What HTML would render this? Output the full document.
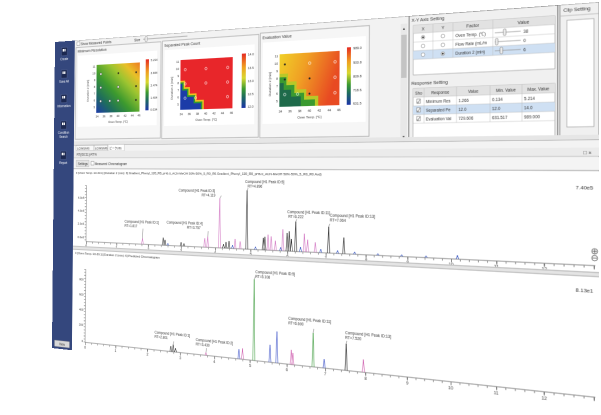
<!DOCTYPE html>
<html><head><meta charset="utf-8"><style>
html,body{margin:0;padding:0;background:#fff;width:601px;height:415px;overflow:hidden}
#w{position:absolute;left:0;top:0;width:1000px;height:600px;transform-origin:0 0;
transform:matrix3d(0.39475,-0.040498,0,-0.00024917,-0.005475,0.50682,0,-0.0000091417,0,0,1,0,55,42,0,1);}
svg text{font-family:"Liberation Sans","Noto Sans CJK JP",sans-serif;fill:#333}
</style></head><body>
<div id="w">
<svg width="1000" height="600" viewBox="0 0 1000 600" xmlns="http://www.w3.org/2000/svg">
<defs>
<linearGradient id="h1" x1="0" y1="1" x2="1" y2="0">
<stop offset="0" stop-color="#1c3aa8"/><stop offset="0.22" stop-color="#1f6f5a"/><stop offset="0.42" stop-color="#3d9a2e"/><stop offset="0.65" stop-color="#9cc430"/><stop offset="0.82" stop-color="#e8c028"/><stop offset="1" stop-color="#ee7a22"/></linearGradient>
<linearGradient id="cb" x1="0" y1="0" x2="0" y2="1">
<stop offset="0" stop-color="#e52a22"/><stop offset="0.25" stop-color="#f0a020"/><stop offset="0.45" stop-color="#d8d830"/><stop offset="0.65" stop-color="#3a9a30"/><stop offset="0.8" stop-color="#1d6a60"/><stop offset="1" stop-color="#1c34a8"/></linearGradient>
<linearGradient id="h3" x1="0" y1="0" x2="1" y2="0.3">
<stop offset="0" stop-color="#f0d028"/><stop offset="0.45" stop-color="#f0a024"/><stop offset="1" stop-color="#e84a22"/></linearGradient>
</defs>
<!-- window -->
<rect x="0" y="0" width="1000" height="600" fill="#f2f2f2" stroke="#9a9a9a" stroke-width="1.5"/>
<!-- sidebar -->
<rect x="0" y="0" width="48" height="600" fill="#34477d"/>
<g fill="#1c2850" stroke="#6a7aa8" stroke-width="0.6">
<rect x="16" y="12" width="14" height="16"/><rect x="16" y="56" width="14" height="16"/><rect x="16" y="104" width="14" height="16"/><rect x="16" y="156" width="14" height="16"/><rect x="16" y="215" width="14" height="16"/></g>
<g fill="#fff"><rect x="19" y="15" width="3" height="5"/><rect x="23" y="15" width="3" height="5"/><rect x="19" y="59" width="3" height="5"/><rect x="23" y="59" width="3" height="5"/><rect x="19" y="107" width="3" height="5"/><rect x="23" y="107" width="3" height="5"/><rect x="19" y="159" width="3" height="5"/><rect x="23" y="159" width="3" height="5"/><rect x="19" y="218" width="3" height="5"/><rect x="23" y="218" width="3" height="5"/></g>
<g font-size="6.5" text-anchor="middle"><text x="23" y="37" style="fill:#fff">Create</text><text x="23" y="81" style="fill:#fff">Save All</text><text x="23" y="129" style="fill:#fff">Information</text><text x="23" y="181" style="fill:#fff">Condition</text><text x="23" y="189" style="fill:#fff">Search</text><text x="23" y="240" style="fill:#fff">Report</text></g>
<rect x="6" y="584" width="36" height="12" fill="#d8d8d8" stroke="#888" stroke-width="0.6"/><text x="24" y="593" font-size="6.5" text-anchor="middle">View</text>

<!-- toolbar -->
<rect x="53" y="3" width="7" height="7" fill="#fff" stroke="#555" stroke-width="0.6"/>
<text x="62" y="10" font-size="7">Show Measured Points</text>
<text x="185" y="10" font-size="7">Size</text>
<line x1="205" y1="7" x2="300" y2="7" stroke="#aaa" stroke-width="1.5"/>
<rect x="209" y="2" width="5" height="10" rx="2" fill="#eee" stroke="#666" stroke-width="0.6"/>

<!-- heatmap panels -->
<g stroke="#a8a8a8" stroke-width="1.2">
<rect x="51" y="14" width="193" height="178" fill="#f6f6f6"/>
<rect x="247" y="13" width="197" height="180" fill="#f6f6f6"/>
<rect x="447" y="11" width="199" height="183" fill="#f6f6f6"/></g>
<rect x="56" y="30" width="180" height="138" fill="#fff"/>
<rect x="252" y="30" width="184" height="140" fill="#fff"/>
<rect x="452" y="28" width="188" height="142" fill="#fff"/>
<g font-size="7.5"><text x="55" y="24">Minimum Resolution</text><text x="251" y="24">Separated Peak Count</text><text x="451" y="22">Evaluation Value</text></g>

<!-- plot1 -->
<rect x="100" y="50" width="98" height="92" fill="url(#h1)"/>
<rect x="211" y="45" width="7" height="95" fill="url(#cb)"/>
<g font-size="6"><text x="222" y="49">5.214</text><text x="222" y="73">3.844</text><text x="222" y="96">2.474</text><text x="222" y="119">1.404</text><text x="222" y="141">0.034</text></g>
<g font-size="6" text-anchor="end"><text x="97" y="55">11</text><text x="97" y="68">10</text><text x="97" y="81">9</text><text x="97" y="94">8</text><text x="97" y="107">7</text><text x="97" y="120">6</text><text x="97" y="133">5</text></g>
<g font-size="6" text-anchor="middle"><text x="102" y="151">34</text><text x="118" y="151">36</text><text x="134" y="151">38</text><text x="150" y="151">40</text><text x="166" y="151">42</text><text x="182" y="151">44</text><text x="197" y="151">46</text><text x="150" y="162">Oven Temp. [°C]</text></g>
<text x="0" y="0" font-size="6" transform="translate(82,120) rotate(-90)">Duration 2 [min]</text>
<g fill="#fff" stroke="#333" stroke-width="0.8"><circle cx="110" cy="68" r="2.3"/><circle cx="110" cy="94" r="2.3"/><circle cx="110" cy="120" r="2.3"/><circle cx="131" cy="120" r="2.3"/><circle cx="150" cy="94" r="2.3"/><circle cx="150" cy="120" r="2.3"/></g>
<g fill="#222"><circle cx="150" cy="68" r="1.8"/><circle cx="190" cy="68" r="1.8"/><circle cx="190" cy="94" r="1.8"/><circle cx="190" cy="120" r="1.8"/></g>

<!-- plot2 -->
<rect x="286" y="50" width="107" height="91" fill="#e8262a"/>
<polygon points="286,141 286,88 296,88 296,100 306,100 306,112 320,112 320,124 335,124 335,141" fill="#f0c020"/>
<polygon points="286,141 286,91 293,91 293,103 303,103 303,115 317,115 317,127 332,127 332,141" fill="#2f9a30"/>
<polygon points="286,141 286,94 290,94 290,106 300,106 300,118 314,118 314,130 329,130 329,141" fill="#1c3ca8"/>
<rect x="411" y="45" width="8" height="96" fill="url(#cb)"/>
<g font-size="6"><text x="423" y="49">14.0</text><text x="423" y="73">13.5</text><text x="423" y="96">13.0</text><text x="423" y="119">12.5</text><text x="423" y="141">12.0</text></g>
<g font-size="6" text-anchor="end"><text x="283" y="55">11</text><text x="283" y="68">10</text><text x="283" y="81">9</text><text x="283" y="94">8</text><text x="283" y="107">7</text><text x="283" y="120">6</text><text x="283" y="133">5</text></g>
<g font-size="6" text-anchor="middle"><text x="288" y="151">34</text><text x="305" y="151">36</text><text x="322" y="151">38</text><text x="339" y="151">40</text><text x="356" y="151">42</text><text x="373" y="151">44</text><text x="391" y="151">46</text><text x="340" y="162">Oven Temp. [°C]</text></g>
<text x="0" y="0" font-size="6" transform="translate(270,122) rotate(-90)">Duration 2 [min]</text>
<g fill="none" stroke="#fff" stroke-width="0.9"><circle cx="296" cy="68" r="2.3"/><circle cx="339" cy="68" r="2.3"/><circle cx="383" cy="68" r="2.3"/><circle cx="296" cy="120" r="2.3"/><circle cx="318" cy="120" r="2.3"/><circle cx="339" cy="94" r="2.3"/><circle cx="383" cy="94" r="2.3"/><circle cx="383" cy="120" r="2.3"/><circle cx="296" cy="94" r="2.3"/></g>

<!-- plot3 -->
<rect x="484" y="50" width="110" height="91" fill="url(#h3)"/>
<polygon points="484,141 484,84 500,84 500,98 516,98 516,112 534,112 534,124 556,124 556,141" fill="#b8c828"/>
<polygon points="484,141 484,90 497,90 497,104 512,104 512,118 530,118 530,130 550,130 550,141" fill="#3a9a30"/>
<polygon points="484,141 484,100 492,100 492,112 506,112 506,124 524,124 524,141" fill="#1e6a4a"/>
<rect x="607" y="45" width="7" height="96" fill="url(#cb)"/>
<g font-size="6"><text x="618" y="49">989.0</text><text x="618" y="73">900.8</text><text x="618" y="96">809.8</text><text x="618" y="119">718.6</text><text x="618" y="141">631.5</text></g>
<g font-size="6" text-anchor="end"><text x="481" y="55">11</text><text x="481" y="68">10</text><text x="481" y="81">9</text><text x="481" y="94">8</text><text x="481" y="107">7</text><text x="481" y="120">6</text><text x="481" y="133">5</text></g>
<g font-size="6" text-anchor="middle"><text x="486" y="151">34</text><text x="504" y="151">36</text><text x="522" y="151">38</text><text x="540" y="151">40</text><text x="558" y="151">42</text><text x="576" y="151">44</text><text x="593" y="151">46</text><text x="540" y="162">Oven Temp. [°C]</text></g>
<text x="0" y="0" font-size="6" transform="translate(468,122) rotate(-90)">Duration 2 [min]</text>
<g fill="#222"><circle cx="494" cy="68" r="1.8"/><circle cx="494" cy="94" r="1.8"/><circle cx="540" cy="94" r="1.8"/><circle cx="540" cy="120" r="1.8"/></g>
<g fill="none" stroke="#fff" stroke-width="0.9"><circle cx="540" cy="68" r="2.3"/><circle cx="586" cy="68" r="2.3"/><circle cx="586" cy="94" r="2.3"/><circle cx="586" cy="120" r="2.3"/><circle cx="494" cy="120" r="2.3"/><circle cx="518" cy="120" r="2.3"/></g>

<!-- scrollbar -->
<rect x="699" y="12" width="11" height="188" fill="#e8e8e8"/>
<rect x="700" y="30" width="9" height="70" fill="#c4c4c4"/>
<text x="704.5" y="22" font-size="6" text-anchor="middle">▲</text><text x="704.5" y="198" font-size="6" text-anchor="middle">▼</text>

<!-- XY axis panel -->
<rect x="713" y="0" width="229" height="215" fill="#f0f0f0" stroke="#7a7a7a" stroke-width="1.5"/>
<text x="717" y="10" font-size="7.5">X-Y Axis Setting</text>
<rect x="720" y="16" width="218" height="80" fill="#fff" stroke="#999" stroke-width="0.8"/>
<rect x="720" y="16" width="218" height="13" fill="#e2e2e2"/>
<rect x="720" y="57" width="218" height="14" fill="#cfe0f3"/>
<g stroke="#b8b8b8" stroke-width="0.6"><line x1="720" y1="29" x2="938" y2="29"/><line x1="720" y1="43" x2="938" y2="43"/><line x1="720" y1="57" x2="938" y2="57"/><line x1="720" y1="71" x2="938" y2="71"/><line x1="752" y1="16" x2="752" y2="71"/><line x1="784" y1="16" x2="784" y2="71"/><line x1="846" y1="16" x2="846" y2="71"/></g>
<g font-size="7" text-anchor="middle"><text x="736" y="25">X</text><text x="768" y="25">Y</text><text x="815" y="25">Factor</text><text x="892" y="25">Value</text></g>
<g fill="#fff" stroke="#666" stroke-width="0.6"><circle cx="736" cy="36" r="3"/><circle cx="768" cy="36" r="3"/><circle cx="736" cy="50" r="3"/><circle cx="768" cy="50" r="3"/><circle cx="736" cy="64" r="3"/><circle cx="768" cy="64" r="3"/></g>
<circle cx="736" cy="36" r="1.5" fill="#222"/><circle cx="768" cy="64" r="1.5" fill="#222"/>
<g font-size="6.5"><text x="788" y="39">Oven Temp. (℃)</text><text x="788" y="53">Flow Rate (mL/m</text><text x="788" y="67">Duration 2 (min)</text>
<text x="892" y="39">38</text><text x="892" y="53">0</text><text x="892" y="67">6</text></g>
<g stroke="#999" stroke-width="1"><line x1="849" y1="36" x2="888" y2="36"/><line x1="849" y1="50" x2="888" y2="50"/><line x1="849" y1="64" x2="888" y2="64"/></g>
<g fill="#eee" stroke="#666" stroke-width="0.6"><rect x="862" y="31" width="4" height="10" rx="1.5"/><rect x="850" y="45" width="4" height="10" rx="1.5"/><rect x="857" y="59" width="4" height="10" rx="1.5"/></g>
<text x="717" y="112" font-size="7.5">Response Setting</text>
<rect x="720" y="118" width="218" height="88" fill="#fff" stroke="#999" stroke-width="0.8"/>
<rect x="720" y="118" width="218" height="14" fill="#e2e2e2"/>
<rect x="720" y="146" width="218" height="14" fill="#cfe0f3"/>
<g stroke="#b8b8b8" stroke-width="0.6"><line x1="720" y1="132" x2="938" y2="132"/><line x1="720" y1="146" x2="938" y2="146"/><line x1="720" y1="160" x2="938" y2="160"/><line x1="720" y1="174" x2="938" y2="174"/><line x1="738" y1="118" x2="738" y2="174"/><line x1="790" y1="118" x2="790" y2="174"/><line x1="842" y1="118" x2="842" y2="174"/><line x1="890" y1="118" x2="890" y2="174"/></g>
<g font-size="6.5" text-anchor="middle"><text x="729" y="128">Sho</text><text x="764" y="128">Response</text><text x="816" y="128">Value</text><text x="866" y="128">Min. Value</text><text x="914" y="128">Max. Value</text></g>
<g fill="#fff" stroke="#555" stroke-width="0.6"><rect x="726" y="135" width="6" height="7"/><rect x="726" y="149" width="6" height="7"/><rect x="726" y="163" width="6" height="7"/></g>
<g font-size="8" text-anchor="middle"><text x="729" y="142">✓</text><text x="729" y="156">✓</text><text x="729" y="170">✓</text></g>
<g font-size="6.5"><text x="741" y="142">Minimum Res</text><text x="741" y="156">Separated Pe</text><text x="741" y="170">Evaluation Val</text>
<text x="793" y="142">1.266</text><text x="793" y="156">12.0</text><text x="793" y="170">729.606</text>
<text x="845" y="142">0.134</text><text x="845" y="156">12.0</text><text x="845" y="170">631.517</text>
<text x="893" y="142">5.214</text><text x="893" y="156">14.0</text><text x="893" y="170">989.000</text></g>

<!-- clip panel -->
<rect x="945" y="0" width="55" height="215" fill="#f0f0f0" stroke="#8a8a8a" stroke-width="1.2"/>
<text x="950" y="11" font-size="7.5">Clip Setting</text>
<line x1="946" y1="17" x2="1000" y2="17" stroke="#aaa" stroke-width="0.8"/>
<rect x="955" y="24" width="38" height="160" fill="#fff" stroke="#999" stroke-width="0.8"/>

<!-- tabs / bars -->
<rect x="48" y="196" width="952" height="8" fill="#e6e6e6"/>
<line x1="48" y1="204" x2="1000" y2="204" stroke="#7a7a7a" stroke-width="1.2"/>
<rect x="48" y="204" width="952" height="11" fill="#f3f3f3"/>
<g stroke="#999" stroke-width="0.6" font-size="6"><rect x="53" y="204" width="42" height="10" fill="#f8f8f8"/><rect x="96" y="204" width="31" height="10" fill="#f8f8f8"/><rect x="128" y="203" width="37" height="12" fill="#fff"/></g>
<g font-size="6"><text x="56" y="212">LC/MS/MS</text><text x="98" y="212">LC/MS/MS</text><text x="131" y="212">ピーク(ID)</text></g>
<rect x="48" y="215" width="952" height="13" fill="#ebebeb"/>
<text x="55" y="224" font-size="6.5">RT(IDC11)-RT%</text>
<text x="990" y="225" font-size="8" text-anchor="end">□ ×</text>
<line x1="48" y1="228" x2="1000" y2="228" stroke="#b0b0b0" stroke-width="0.8"/>
<rect x="48" y="229" width="952" height="20" fill="#f4f4f4"/>
<rect x="54" y="233" width="30" height="12" fill="#e4e4e4" stroke="#999" stroke-width="0.6"/>
<text x="58" y="242" font-size="6.5">Settings</text>
<rect x="89" y="235" width="7" height="7" fill="#fff" stroke="#555" stroke-width="0.6"/>
<text x="98" y="242" font-size="6.5">Measured Chromatogram</text>
<line x1="48" y1="249" x2="1000" y2="249" stroke="#999" stroke-width="1"/>

<!-- chrom1 -->
<rect x="48" y="250" width="952" height="148" fill="#fff"/>
<text x="54" y="259" font-size="6.2">ll [Oven Temp.:10-40.1] [Duration 2 (min): 6] Gradient_Phenyl_120_R0_pH6.0_ACN-MeOH 50%-50%_5_R0_R0.Gradient_Phenyl_120_R0_pH6.0_ACN-MeOH 50%-50%_5_R0_R0.Avd)</text>
<line x1="79" y1="281" x2="79" y2="389" stroke="#444" stroke-width="0.8"/>
<line x1="79" y1="389" x2="995" y2="389" stroke="#444" stroke-width="0.8"/>
<line x1="79" y1="391" x2="995" y2="391" stroke="#444" stroke-width="3" stroke-dasharray="0.8 13.26"/>
<line x1="79" y1="392" x2="995" y2="392" stroke="#444" stroke-width="5" stroke-dasharray="1 69.3"/>
<line x1="77" y1="281" x2="77" y2="389" stroke="#444" stroke-width="3" stroke-dasharray="0.8 5"/>
<g font-size="6" text-anchor="end"><text x="74" y="307">6.0e5</text><text x="74" y="332">4.0e5</text><text x="74" y="357">2.0e5</text><text x="74" y="383">0.0e0</text></g>
<g font-size="7" text-anchor="middle"><text x="79" y="400">0</text><text x="149" y="400">1</text><text x="220" y="400">2</text><text x="290" y="400">3</text><text x="360" y="400">4</text><text x="431" y="400">5</text><text x="501" y="400">6</text><text x="571" y="400">7</text><text x="642" y="400">8</text><text x="712" y="400">9</text><text x="782" y="400">10</text><text x="852" y="400">11</text><text x="923" y="400">12</text></g>
<g fill="none" stroke-width="1">
<path stroke="#d070c0" d="M205 389L207 378L209 389M337 389L339 373L341 389M343 389L345 370L347 389M367 389L369 301L371 389M398 389L400 372L402 389M408 389L410 376L412 389M462 389L464 362L466 389M468 389L470 365L472 389M476 389L478 372L480 389M490 389L492 352L494 389M530 389L532 358L534 389M536 389L538 368L540 389M550 389L552 372L554 389"/>
<path stroke="#222" d="M250 389L252 375L254 389M254 389L256 379L258 389M288 389L290 382L292 389M294 389L296 384L298 389M375 389L377 382L379 389M380 389L382 378L384 389M386 389L388 376L390 389M421 389L423 286L425 389M453 389L455 368L457 389M456 389L458 366L460 389M498 389L500 358L502 389M502 389L504 355L506 389M506 389L508 368L510 389M514 389L516 338L518 389M574 389L576 345L578 389M601 389L603 362L605 389"/>
<path stroke="#3050c0" d="M260 389L262 385L264 389M393 389L395 383L397 389M438 389L440 384L442 389M486 389L488 383L490 389M523 389L525 381L527 389M560 389L562 383L564 389M590 389L592 384L594 389M620 389L622 385L624 389M660 389L662 386L664 389M700 389L702 386L704 389M740 389L742 386L744 389M790 389L792 383L794 389"/>
</g>
<g stroke="#333" stroke-width="0.6" fill="none"><path d="M369 301L372 296M423 286L425 282M516 338L518 334M576 345L578 340M207 378L208 360M345 370L346 360"/></g>
<g font-size="6.5">
<text x="284" y="290">Compound [H1 Peak ID:3]</text><text x="332" y="298">RT=4.119</text>
<text x="419" y="273">Compound [H1 Peak ID:5]</text><text x="424" y="281">RT=4.896</text>
<text x="500" y="324">Compound [H1 Peak ID:11]</text><text x="502" y="332">RT=6.222</text>
<text x="578" y="328">Compound [H1 Peak ID:13]</text><text x="578" y="336">RT=7.064</text>
<text x="167" y="350">Compound [H1 Peak ID:1]</text><text x="167" y="358">RT=1.817</text>
<text x="259" y="349">Compound [H1 Peak ID:4]</text><text x="302" y="357">RT=3.757</text></g>
<text x="992" y="277" font-size="8" text-anchor="end">7.40e5</text>
<g fill="#fff" stroke="#333" stroke-width="0.8"><circle cx="994" cy="368" r="4"/><circle cx="994" cy="378" r="4"/><circle cx="994" cy="552" r="4"/><circle cx="994" cy="562" r="4"/></g>
<path d="M991 368h6M994 365v6M991 378h6M991 552h6M994 549v6M991 562h6" stroke="#333" stroke-width="0.8"/>

<!-- separator -->
<rect x="48" y="398" width="952" height="8" fill="#e4e4e4"/>
<line x1="48" y1="399" x2="1000" y2="399" stroke="#999" stroke-width="0.8"/><line x1="48" y1="405" x2="1000" y2="405" stroke="#999" stroke-width="0.8"/>

<!-- chrom2 -->
<rect x="48" y="406" width="952" height="194" fill="#fff"/>
<text x="54" y="414" font-size="6.2">ll [Oven Temp.:10-39.1] [Duration 2 (min): 6] Predicted Chromatogram</text>
<line x1="79" y1="442" x2="79" y2="582" stroke="#444" stroke-width="0.8"/>
<line x1="79" y1="582" x2="995" y2="582" stroke="#444" stroke-width="0.8"/>
<line x1="79" y1="584" x2="995" y2="584" stroke="#444" stroke-width="3" stroke-dasharray="0.8 13.26"/>
<line x1="79" y1="585" x2="995" y2="585" stroke="#444" stroke-width="5" stroke-dasharray="1 69.3"/>
<line x1="77" y1="442" x2="77" y2="582" stroke="#444" stroke-width="3" stroke-dasharray="0.8 5"/>
<g font-size="6" text-anchor="end"><text x="74" y="464">800</text><text x="74" y="493">600</text><text x="74" y="522">400</text><text x="74" y="551">200</text><text x="74" y="582">0</text></g>
<g font-size="7" text-anchor="middle"><text x="79" y="594">0</text><text x="149" y="594">1</text><text x="220" y="594">2</text><text x="290" y="594">3</text><text x="360" y="594">4</text><text x="431" y="594">5</text><text x="501" y="594">6</text><text x="571" y="594">7</text><text x="642" y="594">8</text><text x="712" y="594">9</text><text x="782" y="594">10</text><text x="852" y="594">11</text><text x="923" y="594">12</text></g>
<g fill="none" stroke-width="1">
<path stroke="#3a9a3a" d="M436 582L438 441L440 582M547 582L549 525L551 582"/>
<path stroke="#3a50c8" d="M467 582L469 552L471 582M480 582L482 528L484 582M567 582L569 567L571 582M407 582L409 565L411 582"/>
<path stroke="#d060b0" d="M414 582L416 563L418 582M507 582L509 557L511 582M510 582L512 562L514 582M636 582L638 561L640 582M341 582L343 577L345 582"/>
<path stroke="#222" d="M268 582L270 572L272 582M273 582L275 569L277 582M278 582L280 575L282 582M606 582L608 538L610 582"/>
</g>
<g stroke="#333" stroke-width="0.6" fill="none"><path d="M438 441L440 436M549 525L550 518M608 538L609 533M275 569L276 563M343 577L344 569"/></g>
<g font-size="6.5">
<text x="440" y="430">Compound [H1 Peak ID:5]</text><text x="440" y="438">RT=5.108</text>
<text x="503" y="506">Compound [H1 Peak ID:11]</text><text x="503" y="514">RT=6.690</text>
<text x="606" y="522">Compound [H1 Peak ID:13]</text><text x="606" y="530">RT=7.520</text>
<text x="235" y="552">Compound [H1 Peak ID:1]</text><text x="235" y="560">RT=2.801</text>
<text x="322" y="558">Compound [H1 Peak ID:2]</text><text x="322" y="566">RT=3.430</text></g>
<text x="992" y="429" font-size="8" text-anchor="end">8.13e1</text>
</svg>
</div>
</body></html>
